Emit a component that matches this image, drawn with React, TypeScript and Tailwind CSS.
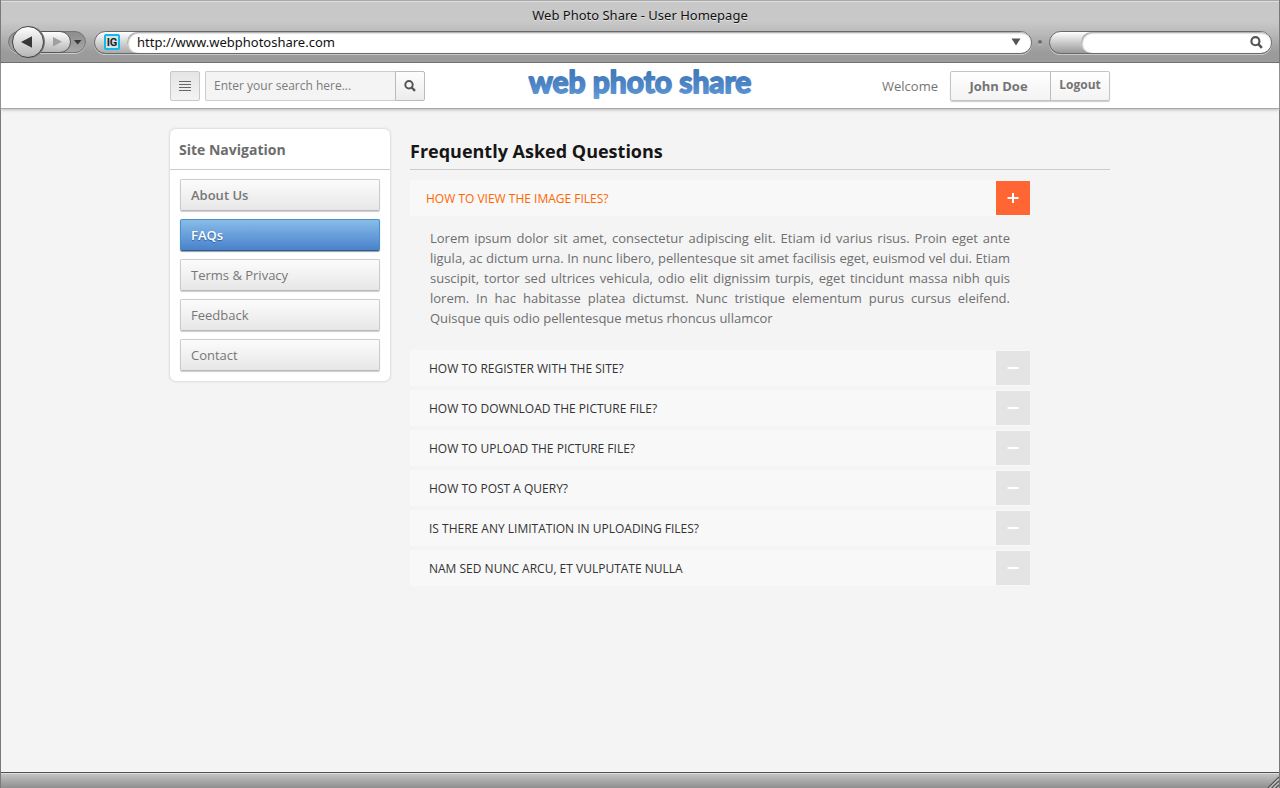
import { useState } from "react";

const navItems = [
  { label: "About Us", style: "font-semibold" },
  { label: "FAQs", style: "font-semibold" },
  { label: "Terms & Privacy", style: "" },
  { label: "Feedback", style: "" },
  { label: "Contact", style: "" },
];

const lorem =
  "Lorem ipsum dolor sit amet, consectetur adipiscing elit. Etiam id varius risus. Proin eget ante ligula, ac dictum urna. In nunc libero, pellentesque sit amet facilisis eget, euismod vel dui. Etiam suscipit, tortor sed ultrices vehicula, odio elit dignissim turpis, eget tincidunt massa nibh quis lorem. In hac habitasse platea dictumst. Nunc tristique elementum purus cursus eleifend. Quisque quis odio pellentesque metus rhoncus ullamcor";

const questions = [
  "How to view the image files?",
  "How to register with the site?",
  "How to download the picture file?",
  "How to upload the picture file?",
  "How to post a query?",
  "Is there any limitation in uploading files?",
  "Nam sed nunc arcu, et vulputate nulla",
];

function Magnifier({ className }: { className: string }) {
  return (
    <svg viewBox="0 0 12 12" className={className} fill="none" stroke="currentColor" aria-hidden="true">
      <circle cx="5" cy="4.8" r="3.7" strokeWidth="2" />
      <path d="M7.7 7.5 11 10.9" strokeWidth="2.4" />
    </svg>
  );
}

function BrowserBar() {
  return (
    <div className="flex flex-col border-b border-[#5f5f5f] bg-linear-to-b from-[#c8c8c8] from-35% via-[#b8b8b8] via-55% to-[#9b9b9b] to-85% pb-1 shadow-[inset_0_1px_0_#a9a9a9,inset_0_2px_0_#dedede]">
      <div className="h-[26px] pt-[5px] text-center font-['Lucida_Grande','Noto_Sans',sans-serif] text-[13px] leading-5 text-[#111] [text-shadow:0_1px_0_#e4e4e4]">
        Web Photo Share - User Homepage
      </div>
      <div className="flex h-8 items-center px-[7px]">
        <svg viewBox="0 0 80 34" className="-my-px h-[34px] w-20 shrink-0" role="img" aria-label="Back and forward">
          <defs>
            <linearGradient id="light" x1="0" y1="0" x2="0" y2="1">
              <stop offset="0" stopColor="#ffffff" />
              <stop offset="1" stopColor="#b4b4b4" />
            </linearGradient>
            <linearGradient id="dark" x1="0" y1="0" x2="0" y2="1">
              <stop offset="0" stopColor="#8c8c8c" />
              <stop offset="1" stopColor="#a8a8a8" />
            </linearGradient>
          </defs>
          <rect x="0.5" y="7.5" width="77" height="21" rx="10.5" fill="none" stroke="#cdcdcd" />
          <rect x="0.5" y="6.5" width="77" height="21" rx="10.5" fill="url(#dark)" stroke="#757575" />
          <path d="M20 6.500H52A10.500 10.500 0 0 1 52 27.500H20Z" fill="url(#light)" stroke="#555" />
          <path d="M45 12 54 16.700 45 21.500Z" fill="#a0a0a0" />
          <path d="M66 15H73.500L69.700 19.500Z" fill="#383838" />
          <circle cx="21.200" cy="17" r="15.800" fill="#777" />
          <circle cx="20" cy="17" r="15.500" fill="url(#light)" stroke="#444" />
          <path d="M13 17 24 11.300V22.700Z" fill="#383838" />
        </svg>
        <div className="ml-1.5 flex h-[23px] flex-1 rounded-full border border-[#696969] bg-linear-to-b from-white to-[#aaa] shadow-[0_1px_0_#c9c9c9]">
          <span className="flex w-8 shrink-0 items-center pl-[9px]">
            <span className="flex size-4 items-center justify-center rounded-xs border-2 border-[#16b8ea] bg-[#d4e4e8] font-['Roboto',sans-serif] text-[11px] leading-none font-bold text-[#222]">
              IG
            </span>
          </span>
          <span className="flex min-w-0 flex-1 items-center rounded-full bg-white pr-2.5 pl-2.5 shadow-[inset_1px_1px_2px_#999]">
            <input
              aria-label="Address"
              defaultValue="http://www.webphotoshare.com"
              className="min-w-0 flex-1 bg-transparent font-['Lucida_Grande','Noto_Sans',sans-serif] text-[13px] leading-5 text-[#111] outline-none"
            />
            <svg viewBox="0 0 10 8" className="h-2 w-2.5 shrink-0" aria-hidden="true">
              <path d="M0.500 0.500H9.500L5 7.500Z" fill="#555" />
            </svg>
          </span>
        </div>
        <span className="mr-[7px] ml-1.5 size-1 shrink-0 rounded-full bg-[#6d6d6d] shadow-[0_1px_0_#ccc]" />
        <div className="flex h-[23px] w-[223px] shrink-0 rounded-full border border-[#696969] bg-linear-to-b from-white to-[#999] pl-[31px] shadow-[0_1px_0_#c9c9c9]">
          <span className="flex min-w-0 flex-1 items-center rounded-full bg-white pr-2 pl-2.5 shadow-[inset_1px_1px_2px_#999]">
            <input aria-label="Web search" className="min-w-0 flex-1 bg-transparent text-[13px] outline-none" />
            <Magnifier className="size-[13px] text-[#555]" />
          </span>
        </div>
      </div>
    </div>
  );
}

function Logo() {
  return (
    <a href="#" aria-label="web photo share">
      <svg viewBox="0 0 240 30" className="h-[30px] w-60 overflow-visible">
        <defs>
          <linearGradient id="logo" gradientUnits="userSpaceOnUse" x1="0" y1="2" x2="0" y2="30">
            <stop offset="0" stopColor="#437ab8" />
            <stop offset="0.500" stopColor="#5088c8" />
            <stop offset="1" stopColor="#6aa2dd" />
          </linearGradient>
        </defs>
        <text
          x="120"
          y="22"
          textAnchor="middle"
          fill="url(#logo)"
          stroke="url(#logo)"
          strokeWidth="1.8"
          strokeLinejoin="round"
          className="font-['Lato',sans-serif] text-[30px] font-bold"
        >
          web photo share
        </text>
      </svg>
    </a>
  );
}

function SiteHeader() {
  return (
    <header className="border-b border-[#a8a8a8] bg-white px-4 pt-2 pb-[7px] shadow-[0_1px_3px_#bbb]">
      <div className="mx-auto grid h-[30px] max-w-[940px] grid-cols-[1fr_auto_1fr] items-center">
        <div className="flex h-[30px] gap-[5px]">
          <button
            aria-label="Menu"
            className="flex w-[30px] items-center justify-center rounded-xs border border-[#c8c8c8] bg-linear-to-b from-[#e5e5e5] to-[#f3f3f3]"
          >
            <svg viewBox="0 0 12 10" className="h-2.5 w-3" stroke="#666" aria-hidden="true">
              <path d="M0 0.500H12M0 3.500H12M0 6.500H12M0 9.500H12" />
            </svg>
          </button>
          <form className="flex" onSubmit={(e) => e.preventDefault()}>
            <input
              aria-label="Search"
              placeholder="Enter your search here..."
              className="w-[190px] rounded-l-xs border border-r-0 border-[#ccc] bg-[#f4f4f4] px-2 text-xs text-[#777] outline-none placeholder:text-[#7b7b7b]"
            />
            <button
              aria-label="Submit search"
              className="flex w-[30px] items-center justify-center rounded-r-xs border border-[#bbb] bg-linear-to-b from-[#fdfdfd] to-[#ececec]"
            >
              <Magnifier className="size-3 text-[#555]" />
            </button>
          </form>
        </div>
        <Logo />
        <div className="flex h-[30px] items-center justify-end gap-3 text-[13px] text-[#747474]">
          <span className="pt-0.5">Welcome</span>
          <div className="flex h-full rounded-xs border border-[#c4c4c4] bg-linear-to-b from-white to-[#f3f3f3] font-bold shadow-[0_1px_1px_#ccc]">
            <button className="w-[100px] border-r border-[#bbb] pt-0.5 pr-1">John Doe</button>
            <button className="w-[58px] pb-0.5 text-xs">Logout</button>
          </div>
        </div>
      </div>
    </header>
  );
}

function SideNav() {
  const [active, setActive] = useState("FAQs");
  return (
    <nav className="w-[220px] shrink-0 rounded-md bg-white shadow-[0_0_2px_1px_#dcdcdc]">
      <h2 className="h-[41px] border-b border-[#ccc] px-[9px] text-sm leading-[42px] font-bold text-[#6c6c6c]">
        Site Navigation
      </h2>
      <ul className="flex flex-col gap-2 px-2.5 pt-[9px] pb-2.5">
        {navItems.map((item) => (
          <li key={item.label}>
            <a
              href="#"
              onClick={(e) => {
                e.preventDefault();
                setActive(item.label);
              }}
              aria-current={active === item.label ? "page" : undefined}
              className={`block h-8 rounded-xs border px-2.5 text-[13px] leading-[30px] ${item.style} ${
                active === item.label
                  ? "border-[#4a90c8] border-b-[#2c5c9c] bg-linear-to-b from-[#88bce9] to-[#4a82cb] text-white shadow-[0_1px_1px_#999] [text-shadow:0_1px_1px_#2f5f9c]"
                  : "border-[#ccc] border-b-[#b8b8b8] bg-linear-to-b from-[#fcfcfc] to-[#e7e7e7] text-[#777] shadow-[0_1px_1px_#ccc]"
              }`}
            >
              {item.label}
            </a>
          </li>
        ))}
      </ul>
    </nav>
  );
}

function Faq() {
  const [open, setOpen] = useState(0);
  return (
    <section className="min-w-0 flex-1">
      <h1 className="h-[41px] border-b border-[#ccc] text-lg leading-[44px] font-bold text-[#161616]">
        Frequently Asked Questions
      </h1>
      <div className="mt-2.5 flex max-w-[620px] flex-col gap-1">
        {questions.map((question, i) => {
          const isOpen = open === i;
          return (
            <div key={question}>
              <h3>
                <button
                  aria-expanded={isOpen}
                  onClick={() => setOpen(isOpen ? -1 : i)}
                  className={`flex h-9 w-full items-center justify-between bg-[#f8f8f8] text-left text-xs uppercase ${
                    isOpen ? "pl-4 text-[#ff6600]" : "pl-[19px] text-[#333]"
                  }`}
                >
                  <span className="pt-0.5">{question}</span>
                  <span
                    className={`flex size-[34px] shrink-0 items-center justify-center ${
                      isOpen ? "bg-[#ff6633]" : "bg-[#e4e4e4]"
                    }`}
                  >
                    <svg viewBox="0 0 12 12" className="size-3" stroke="#fff" strokeWidth="2" aria-hidden="true">
                      <path d={isOpen ? "M0.500 6H11.500M6 1V11" : "M0.500 6H11.500"} />
                    </svg>
                  </span>
                </button>
              </h3>
              {isOpen && (
                <p className="px-5 pt-3 pb-[18px] text-justify text-[13px] leading-5 text-[#6e6e6e]">{lorem}</p>
              )}
            </div>
          );
        })}
      </div>
    </section>
  );
}

export default function App() {
  return (
    <div className="flex min-h-screen flex-col border-x border-[#7a7a7a] bg-[#f4f4f4] font-['Open_Sans',sans-serif]">
      <BrowserBar />
      <SiteHeader />
      <main className="flex-1 px-4 pt-5 pb-8">
        <div className="mx-auto flex max-w-[940px] items-start gap-5">
          <SideNav />
          <Faq />
        </div>
      </main>
      <footer className="flex h-4 items-end justify-end border-t border-[#4f4f4f] bg-linear-to-b from-[#c6c6c6] to-[#8f8f8f] shadow-[inset_0_1px_0_#dedede]">
        <svg viewBox="0 0 12 12" className="size-3" aria-hidden="true">
          <path d="M1 12 12 1M5 12 12 5M9 12 12 9" stroke="#555" strokeWidth="1.300" />
          <path d="M2.500 12 12 2.500M6.500 12 12 6.500M10.500 12 12 10.500" stroke="#ddd" />
        </svg>
      </footer>
    </div>
  );
}
